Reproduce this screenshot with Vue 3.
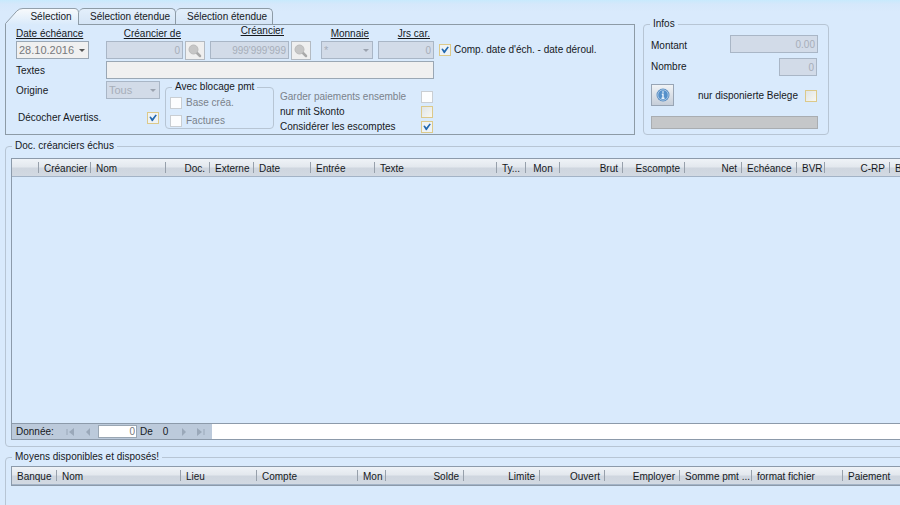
<script setup>
import { ref } from 'vue'

const tabs = ['Sélection', 'Sélection étendue', 'Sélection étendue']
const activeTab = ref(0)

const dueColumns = [
  { label: '', width: '27px' },
  { label: 'Créancier', width: '52px', align: 'right' },
  { label: 'Nom', width: '75px' },
  { label: 'Doc.', width: '44px', align: 'right' },
  { label: 'Externe', width: '44px' },
  { label: 'Date', width: '57px' },
  { label: 'Entrée', width: '64px' },
  { label: 'Texte', width: '122px' },
  { label: 'Ty...', width: '29px' },
  { label: 'Mon', width: '34px', align: 'center' },
  { label: 'Brut', width: '63px', align: 'right' },
  { label: 'Escompte', width: '62px', align: 'right' },
  { label: 'Net', width: '57px', align: 'right' },
  { label: 'Echéance', width: '55px' },
  { label: 'BVR', width: '28px' },
  { label: 'C-RP', width: '65px', align: 'right' },
  { label: 'B', width: 'auto' },
]

const meansColumns = [
  { label: 'Banque', width: '45px' },
  { label: 'Nom', width: '124px' },
  { label: 'Lieu', width: '76px' },
  { label: 'Compte', width: '101px' },
  { label: 'Mon', width: '28px' },
  { label: 'Solde', width: '78px', align: 'right' },
  { label: 'Limite', width: '76px', align: 'right' },
  { label: 'Ouvert', width: '65px', align: 'right' },
  { label: 'Employer', width: '75px', align: 'right' },
  { label: 'Somme pmt ...', width: '72px' },
  { label: 'format fichier', width: '91px' },
  { label: 'Paiement', width: 'auto' },
]

const compareDates = ref(true)
const uncheckWarned = ref(true)
const keepTogether = ref(false)
const onlyDiscount = ref(false)
const considerDiscounts = ref(true)
const onlyAvailable = ref(false)
</script>

<template>
  <main class="page">
    <section class="top">
      <div class="selection">
        <div class="tabs" role="tablist">
          <button
            v-for="(tab, i) in tabs"
            :key="i"
            type="button"
            role="tab"
            class="tab"
            :class="{ first: i === 0, active: i === activeTab }"
            :aria-selected="i === activeTab"
            @click="activeTab = i"
          >
            <svg v-if="i === 0" class="tab-shape" viewBox="0 0 74 18" preserveAspectRatio="none" aria-hidden="true">
              <defs>
                <linearGradient id="tabfill" x1="0" y1="0" x2="0" y2="1">
                  <stop offset="0" stop-color="#f8fafc" />
                  <stop offset="1" stop-color="#d9eafb" />
                </linearGradient>
              </defs>
              <path d="M.5 18V16.500L12 3Q14.500 .5 18 .5H69Q73.500 .5 73.500 5V18" fill="url(#tabfill)" stroke="#8d9ba6" />
            </svg>
            <span>{{ tab }}</span>
          </button>
        </div>

        <form class="panel" @submit.prevent>
          <div class="criteria">
            <div class="field date">
              <label for="due">Date échéance</label>
              <span class="drop light">
                <select id="due"><option>28.10.2016</option></select>
              </span>
            </div>
            <div class="field creditor right">
              <label for="from">Créancier de</label>
              <span class="lookup">
                <input id="from" type="text" value="0" disabled />
                <button type="button" class="search" aria-label="Créancier de">
                  <svg viewBox="0 0 14 14" aria-hidden="true">
                    <path d="M8.500 8.500L12 12" stroke="#a9a9a9" stroke-width="2.500" stroke-linecap="round" />
                    <circle cx="5.500" cy="5.500" r="4.500" fill="#c6c6c6" stroke="#bbb" />
                  </svg>
                </button>
              </span>
            </div>
            <div class="field creditor to">
              <label for="to">Créancier</label>
              <span class="lookup">
                <input id="to" type="text" value="999'999'999" disabled />
                <button type="button" class="search" aria-label="Créancier">
                  <svg viewBox="0 0 14 14" aria-hidden="true">
                    <path d="M8.500 8.500L12 12" stroke="#a9a9a9" stroke-width="2.500" stroke-linecap="round" />
                    <circle cx="5.500" cy="5.500" r="4.500" fill="#c6c6c6" stroke="#bbb" />
                  </svg>
                </button>
              </span>
            </div>
            <div class="field currency right">
              <label for="cur">Monnaie</label>
              <span class="drop">
                <select id="cur" disabled><option>*</option></select>
              </span>
            </div>
            <div class="field days right">
              <label for="days">Jrs car.</label>
              <input id="days" type="text" value="0" disabled />
            </div>
            <label class="check compare">
              <input v-model="compareDates" type="checkbox" />
              Comp. date d'éch. - date déroul.
            </label>
          </div>

          <div class="texts">
            <label for="texts">Textes</label>
            <input id="texts" type="text" />
          </div>

          <div class="options">
            <div class="origin">
              <div class="line">
                <label for="origin">Origine</label>
                <span class="drop">
                  <select id="origin" disabled><option>Tous</option></select>
                </span>
              </div>
              <label class="check warn">
                Décocher Avertiss.
                <input v-model="uncheckWarned" type="checkbox" />
              </label>
            </div>
            <fieldset class="group blocked">
              <legend>Avec blocage pmt</legend>
              <label class="check off"><input type="checkbox" disabled />Base créa.</label>
              <label class="check off"><input type="checkbox" disabled />Factures</label>
            </fieldset>
            <div class="flags">
              <label class="check off">Garder paiements ensemble<input v-model="keepTogether" type="checkbox" disabled /></label>
              <label class="check">nur mit Skonto<input v-model="onlyDiscount" type="checkbox" /></label>
              <label class="check">Considérer les escomptes<input v-model="considerDiscounts" type="checkbox" /></label>
            </div>
          </div>
        </form>
      </div>

      <fieldset class="group infos">
        <legend>Infos</legend>
        <div class="line amount">
          <label for="amount">Montant</label>
          <input id="amount" type="text" value="0.00" disabled />
        </div>
        <div class="line count">
          <label for="count">Nombre</label>
          <input id="count" type="text" value="0" disabled />
        </div>
        <div class="line belege">
          <button type="button" class="info" aria-label="Infos">
            <svg viewBox="0 0 14 14" aria-hidden="true">
              <circle cx="7" cy="7" r="6.500" fill="#5b8fc4" />
              <circle cx="7" cy="7" r="5.200" fill="#5590ca" stroke="#b8d2ea" stroke-width=".8" />
              <path d="M7 3.300V4.800M5.800 6.200H7V10.200M5.500 10.200H8.500" stroke="#e8f3fc" stroke-width="1.400" fill="none" />
            </svg>
          </button>
          <label class="check">nur disponierte Belege<input v-model="onlyAvailable" type="checkbox" /></label>
        </div>
        <div class="progress" role="progressbar"></div>
      </fieldset>
    </section>

    <fieldset class="group listing due">
      <legend>Doc. créanciers échus</legend>
      <div class="grid">
        <table>
          <colgroup><col v-for="(c, i) in dueColumns" :key="i" :style="{ width: c.width }" /></colgroup>
          <thead>
            <tr><th v-for="(c, i) in dueColumns" :key="i" scope="col" :class="c.align">{{ c.label }}</th></tr>
          </thead>
        </table>
        <div class="space"></div>
        <div class="navigator">
          <div class="nav-tools">
            <label for="record">Donnée:</label>
            <button type="button" disabled aria-label="Première">
              <svg viewBox="0 0 9 8"><path d="M1 1V7" /><path class="solid" d="M8 0V8L3 4Z" /></svg>
            </button>
            <button type="button" disabled aria-label="Précédente">
              <svg viewBox="0 0 9 8"><path class="solid" d="M8 0V8L4 4Z" /></svg>
            </button>
            <input id="record" type="text" value="0" />
            <span class="total">De<span>0</span></span>
            <button type="button" disabled aria-label="Suivante">
              <svg viewBox="0 0 9 8"><path class="solid" d="M2 0V8L6 4Z" /></svg>
            </button>
            <button type="button" disabled aria-label="Dernière">
              <svg viewBox="0 0 9 8"><path d="M8 1V7" /><path class="solid" d="M1 0V8L6 4Z" /></svg>
            </button>
          </div>
        </div>
      </div>
    </fieldset>

    <fieldset class="group listing means">
      <legend>Moyens disponibles et disposés!</legend>
      <div class="grid">
        <table>
          <colgroup><col v-for="(c, i) in meansColumns" :key="i" :style="{ width: c.width }" /></colgroup>
          <thead>
            <tr><th v-for="(c, i) in meansColumns" :key="i" scope="col" :class="c.align">{{ c.label }}</th></tr>
          </thead>
        </table>
      </div>
    </fieldset>
  </main>
</template>

<style>
body {
  margin: 0;
  background: #d9eafc;
}
</style>

<style scoped>
* {
  box-sizing: border-box;
}
.page {
  display: flex;
  flex-direction: column;
  height: 100vh;
  overflow: hidden;
  padding: 8px 0 0 5px;
  font: 10px/12px "Liberation Sans", Arial, sans-serif;
  color: #16191d;
  background: linear-gradient(#c8eafd 0, #d5e8fb 4px, #d9eafc 12px);
}
button,
input,
select {
  font: inherit;
  color: inherit;
  margin: 0;
}
label {
  white-space: nowrap;
}

.top {
  display: flex;
  align-items: flex-start;
  gap: 8px;
}
.selection {
  flex: none;
}
.tabs {
  display: flex;
}
.tab {
  height: 16px;
  padding: 0 5px 0 11px;
  border: 1px solid #8d9ba6;
  border-left: 0;
  border-bottom: 0;
  border-radius: 5px 5px 0 0;
  background: linear-gradient(#e3effb, #d5e5f6);
  white-space: nowrap;
}
.tab.first {
  position: relative;
  z-index: 1;
  width: 74px;
  height: 17px;
  margin-bottom: -1px;
  padding: 0 0 0 18px;
  border: 0;
  background: none;
}
.tab-shape {
  position: absolute;
  inset: 0;
  width: 100%;
  height: 100%;
}
.tab span {
  position: relative;
}

.panel {
  width: 630px;
  padding: 0 12px 1px 10px;
  border: 1px solid #8d9ba6;
}
.criteria {
  display: flex;
  align-items: flex-end;
}
.field {
  display: flex;
  flex-direction: column;
  gap: 1px;
}
.field > label {
  text-decoration: underline;
}
.right > label {
  text-align: right;
}
.date {
  width: 73px;
  margin-right: 17px;
}
.creditor {
  width: 99px;
  margin-right: 5px;
}
.creditor.right > label {
  padding-right: 24px;
}
.creditor.to {
  width: 101px;
  margin-right: 10px;
  gap: 4px;
}
.creditor.to > label {
  padding-right: 27px;
  text-align: right;
}
.currency {
  width: 52px;
  margin-right: 5px;
}
.currency > label,
.days > label {
  padding-right: 4px;
}
.days {
  width: 56px;
  margin-right: 5px;
}

input[type="text"] {
  width: 100%;
  min-width: 0;
  height: 18px;
  padding: 0 2px;
  border: 1px solid #9aa7b4;
  border-radius: 0;
  background: #f0f0f0;
}
input[type="text"]:disabled {
  border-color: #a9b6c6;
  background: #d2dbe8;
  color: #a7aeb9;
  text-align: right;
}
.lookup {
  display: flex;
  gap: 2px;
}
.search {
  display: flex;
  flex: none;
  align-items: center;
  justify-content: center;
  width: 20px;
  height: 19px;
  margin-bottom: -1px;
  padding: 0;
  border: 1px solid #b3bac2;
  background: #efefef;
}
.search svg {
  width: 14px;
  height: 14px;
}
.drop {
  position: relative;
  display: block;
}
.drop select {
  display: block;
  width: 100%;
  height: 18px;
  padding: 0 2px;
  border: 1px solid #a9b6c6;
  border-radius: 0;
  background: #d2dbe8;
  appearance: none;
  font-size: 11px;
  opacity: 1;
  color: #a7aeb9;
}
.drop.light select {
  border-color: #9aa7b4;
  background: #f0f0f0;
  color: #77797c;
}
.drop::after {
  content: "";
  position: absolute;
  top: 8px;
  right: 4px;
  border: 3px solid transparent;
  border-top-color: #9ba3af;
  border-bottom: 0;
  pointer-events: none;
}
.drop.light::after {
  border-top-color: #555;
}

.check {
  display: flex;
  align-items: center;
  gap: 3px;
}
.check.off {
  color: #7b828b;
}
input[type="checkbox"] {
  position: relative;
  flex: none;
  width: 12px;
  height: 12px;
  border: 1px solid #dcc98a;
  background: linear-gradient(135deg, #dfe5e8, #f8f7f0);
  appearance: none;
}
input[type="checkbox"]:checked {
  background: #eef3f6;
}
input[type="checkbox"]:disabled {
  border-color: #c9ced3;
  background: #fcfdfe;
}
input[type="checkbox"]:checked::after {
  content: "";
  position: absolute;
  inset: 1px;
  background: #2268b0;
  clip-path: polygon(4% 38%, 22% 30%, 42% 55%, 82% 5%, 98% 16%, 46% 92%, 36% 92%);
}
.compare {
  height: 18px;
}

.texts {
  display: flex;
  align-items: center;
  margin-top: 2px;
}
.texts label {
  width: 90px;
  padding-top: 1px;
}
.texts input[type="text"] {
  width: 328px;
}
.options {
  display: flex;
  align-items: flex-start;
  padding-top: 2px;
}
.line {
  display: flex;
  align-items: center;
  justify-content: space-between;
}
.origin {
  width: 144px;
  margin-right: 5px;
}
.origin .line label {
  padding-top: 2px;
}
.origin .drop {
  width: 54px;
}
.warn {
  justify-content: space-between;
  padding: 13px 1px 0 2px;
}

.group {
  min-width: 0;
  margin: 0;
  padding: 0;
  border: 1px solid #b7c5d4;
  border-radius: 4px;
}
.group legend {
  margin-left: 6px;
  padding: 0 3px;
}
.blocked {
  width: 109px;
  height: 48px;
}
.blocked .check {
  gap: 4px;
  height: 18px;
  padding: 2px 0 0 4px;
}
.flags {
  display: flex;
  flex-direction: column;
  gap: 3px;
  width: 153px;
  margin: 10px 0 0 6px;
}
.flags .check {
  justify-content: space-between;
}

.infos {
  width: 186px;
  margin-top: 10px;
  padding: 0 10px 5px 7px;
}
.infos legend {
  margin-left: -1px;
}
.amount {
  margin-top: 5px;
}
.amount label {
  padding-top: 3px;
}
.amount input[type="text"] {
  width: 88px;
}
.count {
  margin-top: 5px;
}
.count input[type="text"] {
  width: 38px;
  margin-right: 1px;
}
.belege {
  margin-top: 8px;
}
.belege .check {
  gap: 7px;
  padding: 2px 1px 0 0;
}
.info {
  display: flex;
  align-items: center;
  justify-content: center;
  width: 23px;
  height: 22px;
  padding: 0;
  border: 1px solid #98a5b5;
  background: linear-gradient(#f0f3f6, #c6ced9);
}
.info svg {
  width: 14px;
  height: 14px;
}
.progress {
  height: 13px;
  margin-top: 10px;
  border: 1px solid #a9adb1;
  background: #c5c7c9;
}

.listing {
  display: flex;
  flex-direction: column;
  margin-right: -10px;
  padding: 6px 0 6px 5px;
}
.listing legend {
  margin-left: 1px;
}
.due {
  flex: 1;
  min-height: 0;
  margin-top: 5px;
}
.means {
  flex: none;
  height: 64px;
  margin: 4px -10px -10px 0;
  padding-top: 3px;
  padding-bottom: 0;
}
.grid {
  display: flex;
  flex: 1;
  flex-direction: column;
  min-height: 0;
  overflow: hidden;
  border: 1px solid #8c9aaa;
}
table {
  width: 100%;
  border-collapse: collapse;
  table-layout: fixed;
}
thead {
  background: linear-gradient(#eff3f7 0, #e3e8ee 45%, #cfd6df 55%, #d2d9e2 100%);
}
tr {
  border-bottom: 1px solid #a3b3c6;
}
th {
  position: relative;
  height: 17px;
  padding: 3px 5px 0;
  font-weight: normal;
  text-align: left;
  white-space: nowrap;
}
th::after {
  content: "";
  position: absolute;
  top: 3px;
  right: 0;
  width: 1px;
  height: 11px;
  background: #97a0ab;
}
th:last-child::after {
  display: none;
}
th.right {
  text-align: right;
}
th.center {
  text-align: center;
}
.space {
  flex: 1;
}
.navigator {
  height: 16px;
  border-top: 1px solid #8c9aaa;
  background: #fff;
}
.nav-tools {
  display: flex;
  align-items: center;
  width: 200px;
  height: 100%;
  padding-left: 4px;
  background: #bccadb;
}
.nav-tools > * {
  flex: none;
}
.nav-tools label {
  width: 50px;
}
.nav-tools button {
  display: flex;
  width: 16px;
  padding: 0;
  border: 0;
  background: none;
}
.nav-tools svg {
  width: 9px;
  height: 8px;
  fill: none;
  stroke: #9aa8b9;
}
.nav-tools .solid {
  fill: #9aa8b9;
  stroke: none;
}
.nav-tools input[type="text"] {
  width: 39px;
  height: 13px;
  margin-right: 3px;
  padding: 0 1px;
  background: #fff;
  color: #77797c;
  text-align: right;
}
.total {
  display: flex;
  gap: 10px;
  margin-right: 12px;
}
</style>
